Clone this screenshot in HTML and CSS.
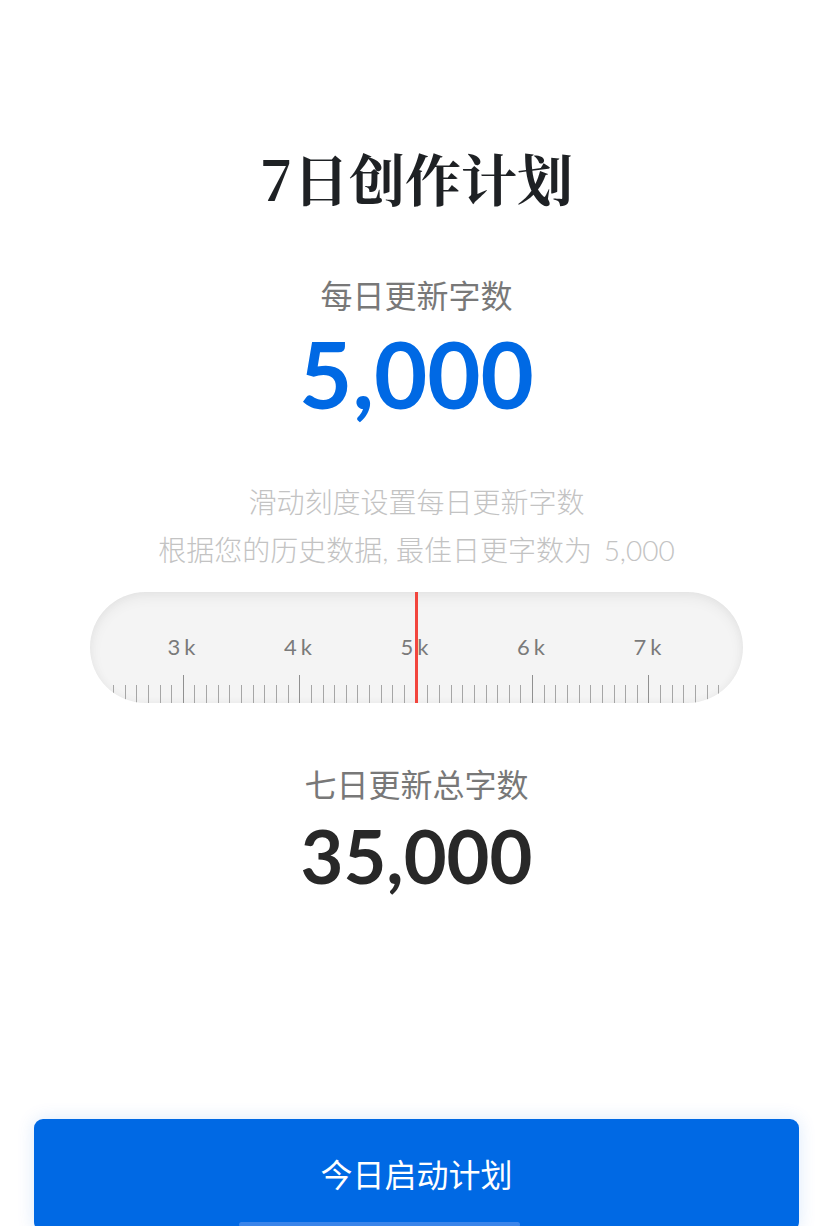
FILE: index.html
```html
<!DOCTYPE html>
<html lang="zh-CN">
<head>
<meta charset="utf-8">
<title>7日创作计划</title>
<link rel="stylesheet" href="styles.css">
</head>
<body>
<main class="page">
  <h1 class="title">7日创作计划</h1>
  <div class="label label-daily">每日更新字数</div>
  <div class="big big-blue">5,000</div>
  <div class="hint">
    <p>滑动刻度设置每日更新字数</p>
    <p>根据您的历史数据, 最佳日更字数为 <span class="hint-num">5,000</span></p>
  </div>
  <div class="ruler">
    <div class="ruler-labels">
      <span>3k</span><span>4k</span><span>5k</span><span>6k</span><span>7k</span>
    </div>
    <div class="ticks">
      <i></i><i></i><i></i><i></i><i></i><i></i><i class="major"></i><i></i><i></i><i></i>
      <i></i><i></i><i></i><i></i><i></i><i></i><i class="major"></i><i></i><i></i><i></i>
      <i></i><i></i><i></i><i></i><i></i><i></i><i class="major"></i><i></i><i></i><i></i>
      <i></i><i></i><i></i><i></i><i></i><i></i><i class="major"></i><i></i><i></i><i></i>
      <i></i><i></i><i></i><i></i><i></i><i></i><i class="major"></i><i></i><i></i><i></i>
      <i></i><i></i><i></i>
    </div>
    <div class="pointer"></div>
  </div>
  <div class="label label-total">七日更新总字数</div>
  <div class="big big-dark">35,000</div>
  <button class="start-btn" type="button">今日启动计划<span class="home-bar"></span></button>
</main>
</body>
</html>
```

FILE: styles.css
```css
html, body {
  margin: 0;
  padding: 0;
  background: #ffffff;
  overflow: hidden;
  height: 1226px;
}

.page {
  width: 833px;
  padding-top: 137px;
  box-sizing: border-box;
  display: flex;
  flex-direction: column;
  align-items: center;
  font-family: Lato, "Noto Sans CJK SC", sans-serif;
}

.page > * {
  flex-shrink: 0;
}

.title {
  margin: 0;
  font-family: "Noto Serif CJK SC", "Noto Sans CJK SC", serif;
  font-weight: 700;
  font-size: 56px;
  line-height: 80px;
  color: #1e2124;
}

.label {
  font-size: 32px;
  line-height: 44px;
  color: #787878;
}

.label-daily {
  margin-top: 57px;
}

.big {
  font-family: Lato, sans-serif;
  font-weight: 700;
}

.big-blue {
  margin-top: 6px;
  font-size: 92px;
  line-height: 100px;
  color: #0069e4;
}

.hint {
  margin-top: 54px;
  text-align: center;
  color: #c3c3c3;
  font-size: 28px;
  line-height: 48px;
  font-weight: 300;
}

.hint p {
  margin: 0;
}

.hint-num {
  margin-left: 4px;
}

.ruler {
  position: relative;
  margin-top: 18px;
  width: 653px;
  height: 111px;
  border-radius: 56px;
  background: #f4f4f4;
  box-shadow: inset 0 5px 14px rgba(0, 0, 0, 0.055), inset 0 0 10px rgba(0, 0, 0, 0.035);
  overflow: hidden;
  display: flex;
  flex-direction: column;
  align-items: center;
}

.ruler-labels {
  margin-top: 43px;
  width: 582.7px;
  display: grid;
  grid-template-columns: repeat(5, 1fr);
}

.ruler-labels span {
  text-align: center;
  font-size: 22px;
  line-height: 24px;
  letter-spacing: 4px;
  color: #7a7a7a;
}

.ticks {
  margin-top: auto;
  width: 607px;
  height: 28px;
  display: flex;
  justify-content: space-between;
  align-items: flex-end;
}

.ticks i {
  display: block;
  width: 1px;
  height: 18px;
  background: #a6a6a6;
}

.ticks i.major {
  height: 28px;
  background: #909090;
}

.pointer {
  position: absolute;
  top: 0;
  bottom: 0;
  left: 325px;
  width: 3px;
  background: #f2453d;
}

.label-total {
  margin-top: 60px;
}

.big-dark {
  margin-top: 7px;
  font-size: 74px;
  line-height: 84px;
  color: #282828;
}

.start-btn {
  position: relative;
  margin-top: 221px;
  width: 765px;
  height: 112px;
  border: none;
  border-radius: 9px;
  background: #0069e4;
  box-shadow: 0 0 18px rgba(0, 105, 228, 0.14);
  color: #ffffff;
  font-family: Lato, "Noto Sans CJK SC", sans-serif;
  font-size: 32px;
  font-weight: 400;
  line-height: 44px;
  padding: 0;
}

.home-bar {
  position: absolute;
  left: 205px;
  top: 103px;
  width: 281px;
  height: 5px;
  border-radius: 3px;
  background: #3b85ea;
}
```
